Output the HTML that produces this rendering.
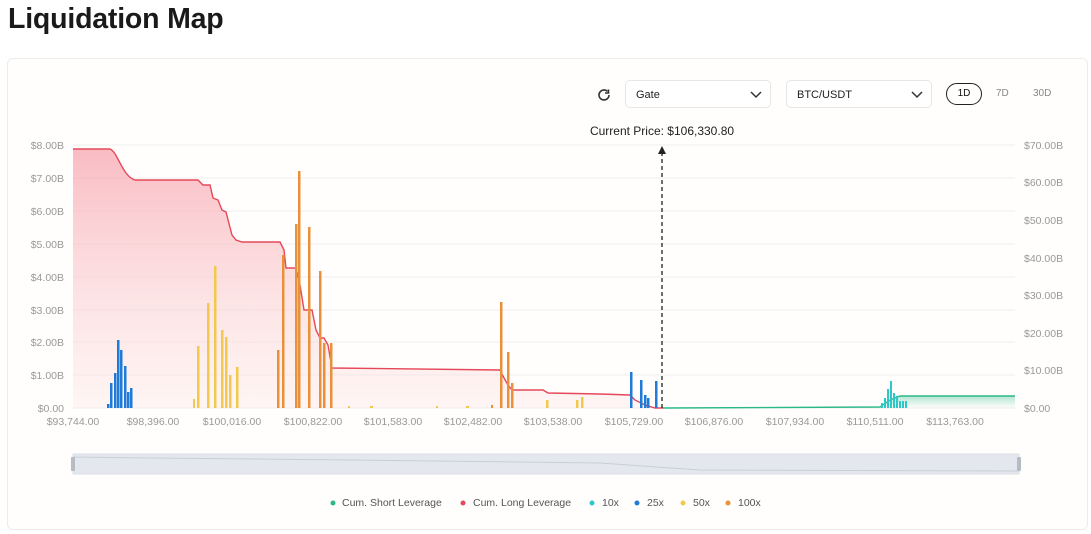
<!DOCTYPE html>
<html><head><meta charset="utf-8"><style>
body{margin:0;width:1091px;height:534px;background:#fff;font-family:"Liberation Sans",sans-serif;overflow:hidden;position:relative}
h1{position:absolute;left:8px;top:3px;margin:0;font-size:28.5px;font-weight:700;color:#1a1a1a;letter-spacing:-0.2px}
.card{position:absolute;left:7px;top:58px;width:1079px;height:470px;border:1px solid #ececec;border-radius:6px;background:#fffefc}
.sel{position:absolute;top:80px;height:28px;border:1px solid #e6e6e6;border-radius:5px;background:#fff;font-size:11px;color:#222;line-height:28px;padding-left:10px;box-sizing:border-box}
.tf{position:absolute;top:83px;font-size:10px;color:#888;line-height:22px}
</style></head><body>
<h1>Liquidation Map</h1>
<div class="card"></div>
<svg style="position:absolute;left:596px;top:87px" width="16" height="16" viewBox="0 0 16 16"><path d="M13 8a5 5 0 1 1-1.6-3.7" fill="none" stroke="#333" stroke-width="1.6"/><path d="M12.5 2.5v3.5H9" fill="none" stroke="#333" stroke-width="1.6"/></svg>
<div class="sel" style="left:625px;width:146px">Gate<svg style="position:absolute;right:8px;top:9px" width="12" height="10"><path d="M1 2l5 5 5-5" fill="none" stroke="#333" stroke-width="1.5"/></svg></div>
<div class="sel" style="left:786px;width:146px">BTC/USDT<svg style="position:absolute;right:8px;top:9px" width="12" height="10"><path d="M1 2l5 5 5-5" fill="none" stroke="#333" stroke-width="1.5"/></svg></div>
<div class="tf" style="left:946px;width:36px;height:22px;border:1px solid #222;border-radius:12px;box-sizing:border-box;text-align:center;color:#111;line-height:20px">1D</div>
<div class="tf" style="left:996px">7D</div>
<div class="tf" style="left:1033px">30D</div>
<svg style="position:absolute;left:0;top:0" width="1091" height="534" font-family="Liberation Sans, sans-serif">
<defs>
<linearGradient id="gr" x1="0" y1="0" x2="0" y2="1"><stop offset="0" stop-color="#f7a6b0" stop-opacity=".75"/><stop offset="1" stop-color="#fde4e4" stop-opacity=".35"/></linearGradient>
<linearGradient id="gg" x1="0" y1="0" x2="0" y2="1"><stop offset="0" stop-color="#2bb88a" stop-opacity=".35"/><stop offset="1" stop-color="#2bb88a" stop-opacity="0"/></linearGradient>
</defs>
<g stroke="#eeeeee" stroke-width="1">
<line x1="73" x2="1015" y1="145" y2="145"/><line x1="73" x2="1015" y1="178" y2="178"/><line x1="73" x2="1015" y1="211" y2="211"/><line x1="73" x2="1015" y1="244" y2="244"/><line x1="73" x2="1015" y1="277" y2="277"/><line x1="73" x2="1015" y1="310" y2="310"/><line x1="73" x2="1015" y1="342" y2="342"/><line x1="73" x2="1015" y1="375" y2="375"/><line x1="73" x2="1015" y1="408" y2="408"/>
</g>
<g font-size="10.5" fill="#999" text-anchor="end">
<text x="64" y="149">$8.00B</text><text x="64" y="182">$7.00B</text><text x="64" y="215">$6.00B</text><text x="64" y="248">$5.00B</text><text x="64" y="281">$4.00B</text><text x="64" y="314">$3.00B</text><text x="64" y="346">$2.00B</text><text x="64" y="379">$1.00B</text><text x="64" y="412">$0.00</text>
</g>
<g font-size="10.5" fill="#999">
<text x="1024" y="149">$70.00B</text><text x="1024" y="186">$60.00B</text><text x="1024" y="224">$50.00B</text><text x="1024" y="262">$40.00B</text><text x="1024" y="299">$30.00B</text><text x="1024" y="337">$20.00B</text><text x="1024" y="374">$10.00B</text><text x="1024" y="412">$0.00</text>
</g>
<g font-size="10.5" fill="#999" text-anchor="middle">
<text x="73" y="425">$93,744.00</text><text x="153" y="425">$98,396.00</text><text x="232" y="425">$100,016.00</text><text x="313" y="425">$100,822.00</text><text x="393" y="425">$101,583.00</text><text x="473" y="425">$102,482.00</text><text x="553" y="425">$103,538.00</text><text x="634" y="425">$105,729.00</text><text x="714" y="425">$106,876.00</text><text x="795" y="425">$107,934.00</text><text x="875" y="425">$110,511.00</text><text x="955" y="425">$113,763.00</text>
</g>
<path d="M73 149L110 149C118 152 122 176 135 180L198 180L203 185L210 185L213 198L218 200L222 210L226 212L232 235L236 240L242 242L280 242L284 250L286 268L296 268L298 276L300 285L304 310L312 310L316 330L320 338L324 338L328 345L332 368L500 370L504 378L508 385L512 390L543 390L548 393L600 394L630 395L635 400L645 405L655 408L663 408L73 408Z" fill="url(#gr)"/>
<path d="M73 149L110 149C118 152 122 176 135 180L198 180L203 185L210 185L213 198L218 200L222 210L226 212L232 235L236 240L242 242L280 242L284 250L286 268L296 268L298 276L300 285L304 310L312 310L316 330L320 338L324 338L328 345L332 368L500 370L504 378L508 385L512 390L543 390L548 393L600 394L630 395L635 400L645 405L655 408L663 408" fill="none" stroke="#e5485a" stroke-width="1.4"/>
<path d="M663 408L880 407L890 400L900 396L1015 396L1015 408Z" fill="url(#gg)"/>
<path d="M663 408L880 407L890 400L900 396L1015 396" fill="none" stroke="#2bb88a" stroke-width="1.4"/>
<g fill="#1f7ad8">
<rect x="107" y="404" width="2.5" height="4"/><rect x="110" y="383" width="2.5" height="25"/><rect x="114" y="373" width="2.5" height="35"/><rect x="117" y="340" width="2.5" height="68"/><rect x="120" y="350" width="2.5" height="58"/><rect x="124" y="366" width="2.5" height="42"/><rect x="127" y="392" width="2.5" height="16"/><rect x="130" y="388" width="2.5" height="20"/>
<rect x="630" y="372" width="2.5" height="36"/><rect x="640" y="380" width="2.5" height="28"/><rect x="644" y="395" width="2.5" height="13"/><rect x="647" y="398" width="2.5" height="10"/><rect x="655" y="381" width="2.5" height="27"/>
</g>
<g fill="#f2c94c">
<rect x="193" y="399" width="2" height="9"/><rect x="197" y="346" width="2.5" height="62"/><rect x="207" y="303" width="2.5" height="105"/><rect x="214" y="266" width="2.5" height="142"/><rect x="221" y="330" width="2.5" height="78"/><rect x="225" y="337" width="2.5" height="71"/><rect x="229" y="375" width="2.5" height="33"/><rect x="236" y="367" width="2.5" height="41"/>
<rect x="546" y="400" width="2.5" height="8"/><rect x="576" y="400" width="2.5" height="8"/><rect x="581" y="397" width="2.5" height="11"/>
<rect x="348" y="406" width="2" height="2"/><rect x="370" y="406" width="3" height="2"/><rect x="436" y="406" width="2" height="2"/><rect x="466" y="406" width="3" height="2"/>
</g>
<g fill="#e8913a">
<rect x="277" y="350" width="2.5" height="58"/><rect x="282" y="255" width="2.5" height="153"/><rect x="295" y="224" width="2.5" height="184"/><rect x="298" y="171" width="2.5" height="237"/><rect x="308" y="227" width="2.5" height="181"/><rect x="319" y="271" width="2.5" height="137"/><rect x="323" y="343" width="2.5" height="65"/><rect x="330" y="343" width="2.5" height="65"/>
<rect x="500" y="302" width="2.5" height="106"/><rect x="507" y="352" width="2.5" height="56"/><rect x="511" y="383" width="2.5" height="25"/><rect x="491" y="405" width="2" height="3"/>
</g>
<g fill="#2ec8c8">
<rect x="881" y="403" width="2" height="5"/><rect x="884" y="398" width="2" height="10"/><rect x="887" y="389" width="2" height="19"/><rect x="890" y="381" width="2" height="27"/><rect x="893" y="393" width="2" height="15"/><rect x="896" y="396" width="2" height="12"/><rect x="899" y="401" width="2" height="7"/><rect x="902" y="401" width="2" height="7"/><rect x="905" y="401" width="2" height="7"/>
</g>
<line x1="662" y1="152" x2="662" y2="408" stroke="#222" stroke-width="1.3" stroke-dasharray="4,3"/>
<path d="M658 154L662 146L666 154Z" fill="#222"/>
<text x="662" y="135" font-size="12" fill="#222" text-anchor="middle">Current Price: $106,330.80</text>
<rect x="73" y="454" width="946" height="20" fill="#e4e8ee" stroke="#d8dde4"/>
<path d="M73 457L150 458L350 460L600 463L700 470L1019 471" fill="none" stroke="#c8ced8" stroke-width="1"/>
<rect x="71" y="457" width="4" height="14" rx="1" fill="#b5bcc6"/><rect x="1017" y="457" width="4" height="14" rx="1" fill="#b5bcc6"/>
<g font-size="10.5" fill="#555">
<circle cx="333" cy="503" r="2.5" fill="#2bb88a"/><text x="342" y="506">Cum. Short Leverage</text>
<circle cx="463" cy="503" r="2.5" fill="#e5485a"/><text x="473" y="506">Cum. Long Leverage</text>
<circle cx="592" cy="503" r="2.5" fill="#2ec8c8"/><text x="602" y="506">10x</text>
<circle cx="637" cy="503" r="2.5" fill="#1f7ad8"/><text x="647" y="506">25x</text>
<circle cx="683" cy="503" r="2.5" fill="#f2c94c"/><text x="693" y="506">50x</text>
<circle cx="728" cy="503" r="2.5" fill="#e8913a"/><text x="738" y="506">100x</text>
</g>
</svg>
</body></html>
